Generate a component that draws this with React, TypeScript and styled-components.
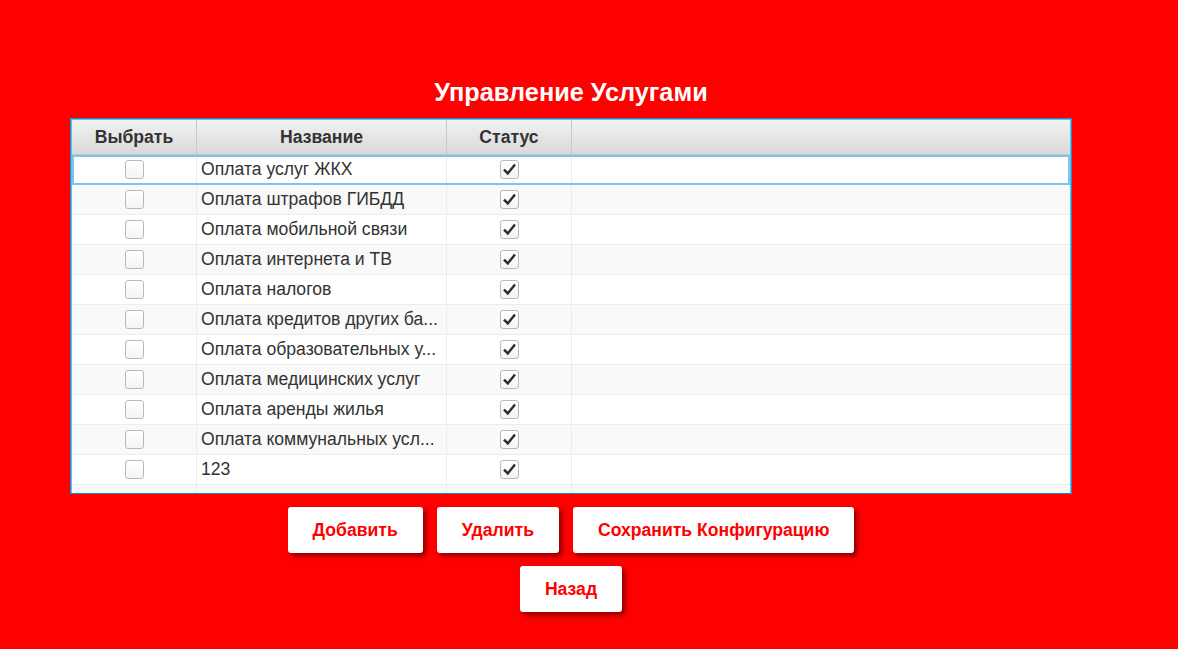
import React from 'react';
import styled, { createGlobalStyle, css } from 'styled-components';

const services = [
  'Оплата услуг ЖКХ',
  'Оплата штрафов ГИБДД',
  'Оплата мобильной связи',
  'Оплата интернета и ТВ',
  'Оплата налогов',
  'Оплата кредитов других ба...',
  'Оплата образовательных у...',
  'Оплата медицинских услуг',
  'Оплата аренды жилья',
  'Оплата коммунальных усл...',
  '123',
];

const GlobalStyle = createGlobalStyle`
  html, body {
    margin: 0;
    padding: 0;
    background: #ff0000;
    font-family: "Liberation Sans", Arial, sans-serif;
  }
`;

function CheckMark() {
  return (
    <svg width="15" height="15" viewBox="0 0 15 15">
      <path d="M2 7.6 L5.8 11.4 L13 2.4" fill="none" stroke="#2b2b2b" strokeWidth="2.4" />
    </svg>
  );
}

function App() {
  return (
    <Page>
      <GlobalStyle />
      <Title>Управление Услугами</Title>
      <Table>
        <HeaderRow>
          <HeaderCell $w={125}>Выбрать</HeaderCell>
          <HeaderCell $w={250}>Название</HeaderCell>
          <HeaderCell $w={125}>Статус</HeaderCell>
          <HeaderCell $fill />
        </HeaderRow>
        <Body>
          {services.map((name, i) => (
            <Row key={name} $odd={i % 2 === 1} $focused={i === 0}>
              <Cell $w={125} $center>
                <Box />
              </Cell>
              <Cell $w={250}>{name}</Cell>
              <Cell $w={125} $center>
                <Box>
                  <CheckMark />
                </Box>
              </Cell>
              <Cell $fill />
            </Row>
          ))}
          <Row $odd>
            <Cell $w={125} />
            <Cell $w={250} />
            <Cell $w={125} />
            <Cell $fill />
          </Row>
        </Body>
      </Table>
      <Buttons>
        <Button>Добавить</Button>
        <Button>Удалить</Button>
        <Button>Сохранить Конфигурацию</Button>
      </Buttons>
      <Buttons>
        <Button>Назад</Button>
      </Buttons>
    </Page>
  );
}
export default App;

const Page = styled.div`
  width: 1178px;
  height: 649px;
  display: flex;
  flex-direction: column;
  align-items: center;
  padding: 78px 36px 0 0;
  box-sizing: border-box;
  background: #ff0000;
`;

const Title = styled.h1`
  margin: 0 0 12px;
  font-size: 25.3px;
  line-height: 28px;
  font-weight: 700;
  color: #fff;
`;

const Table = styled.div`
  width: 1002px;
  height: 376px;
  box-sizing: border-box;
  border: 1px solid #1d8fcf;
  box-shadow: inset 0 0 0 1px #6fbde6;
  background: #fff;
  display: flex;
  flex-direction: column;
  overflow: hidden;
`;

const HeaderRow = styled.div`
  display: flex;
  height: 35px;
  margin: 1px 1px 0;
  background: linear-gradient(#f2f2f2, #d9d9d9);
  border-bottom: 1px solid #c4c4c4;
  box-sizing: border-box;
  flex-shrink: 0;
`;

const HeaderCell = styled.div<{ $w?: number; $fill?: boolean }>`
  ${(p) => (p.$fill ? 'flex: 1;' : `width: ${p.$w}px;`)}
  box-sizing: border-box;
  border-right: 1px solid #c9c9c9;
  display: flex;
  align-items: center;
  justify-content: center;
  font-size: 17.6px;
  font-weight: 700;
  color: #333;
  &:last-child {
    border-right: none;
  }
`;

const Body = styled.div`
  flex: 1;
  margin: 0 1px;
  overflow: hidden;
`;

const Row = styled.div<{ $odd?: boolean; $focused?: boolean }>`
  display: flex;
  height: 30px;
  box-sizing: border-box;
  background: ${(p) => (p.$odd ? '#f9f9f9' : '#fff')};
  border-bottom: 1px solid #ececec;
  ${(p) =>
    p.$focused &&
    css`
      outline: 2px solid #79c7e6;
      outline-offset: -2px;
    `}
`;

const Cell = styled.div<{ $w?: number; $fill?: boolean; $center?: boolean }>`
  ${(p) => (p.$fill ? 'flex: 1;' : `width: ${p.$w}px;`)}
  box-sizing: border-box;
  border-right: 1px solid #ececec;
  display: flex;
  align-items: center;
  justify-content: ${(p) => (p.$center ? 'center' : 'flex-start')};
  padding: 0 4px;
  font-size: 17.6px;
  color: #333;
  white-space: nowrap;
  overflow: hidden;
  &:last-child {
    border-right: none;
  }
`;

const Box = styled.div`
  width: 19px;
  height: 19px;
  flex-shrink: 0;
  box-sizing: border-box;
  border: 1px solid #b9b9b9;
  border-radius: 3px;
  background: linear-gradient(#ffffff, #f4f4f4);
  display: flex;
  align-items: center;
  justify-content: center;
`;

const Buttons = styled.div`
  display: flex;
  gap: 14px;
  margin-top: 13px;
`;

const Button = styled.button`
  height: 46px;
  padding: 0 25px;
  border: none;
  border-radius: 3px;
  background: #fff;
  color: #ff0000;
  font-family: "Liberation Sans", Arial, sans-serif;
  font-size: 17.6px;
  font-weight: 700;
  box-shadow: 3px 3px 5px rgba(60, 0, 0, 0.6);
  cursor: pointer;
`;
